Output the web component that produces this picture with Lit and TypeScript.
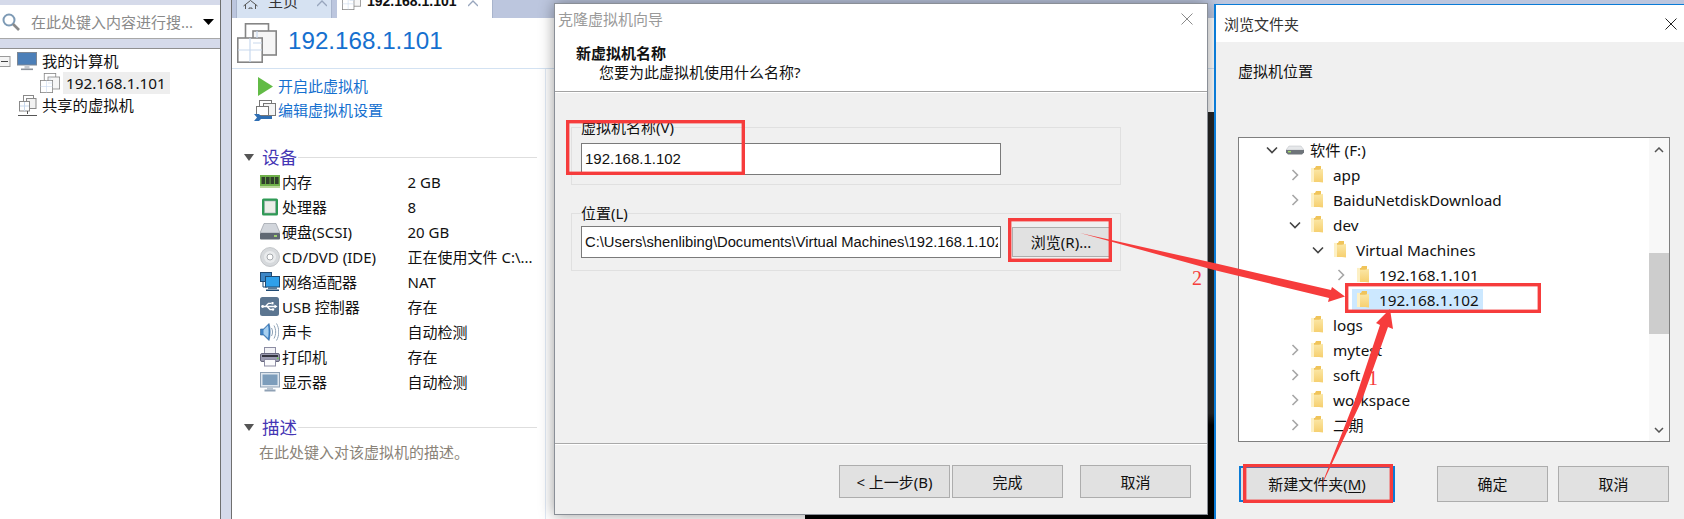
import { LitElement, html, css, svg } from "lit";
import { customElement } from "lit/decorators.js";

const vmIcon = (w: number, h: number) => html`<svg width=${w} height=${h} viewBox="0 0 40 40" fill="#fff" stroke="#858585" stroke-width="1.6">
  <rect x="8.5" y="0.8" width="23" height="22"/>
  <rect x="16" y="8" width="23.2" height="24" fill="#f6f6f6"/>
  <rect x="0.8" y="15" width="24.4" height="24.2"/>
  <path d="M13 15v24M1 27h24M20 8v7M16 20h9" stroke="#c9d9ee" fill="none" stroke-width="1.2"/>
</svg>`;

const monitor = html`<svg width="20" height="19" viewBox="0 0 20 19">
  <rect x="0.5" y="0.5" width="19" height="12.5" fill="#4c7fb8" stroke="#7d8794"/>
  <rect x="7.5" y="13" width="5" height="3.5" fill="#c4c8cf"/>
  <rect x="4" y="16.5" width="12" height="1.6" fill="#8c929b"/>
</svg>`;

const sharedVm = html`<svg width="19" height="21" viewBox="0 0 19 21" fill="#fff" stroke="#8a8a8a">
  <rect x="5.5" y="0.5" width="10" height="10"/>
  <rect x="8.5" y="3.5" width="9.5" height="10" fill="#f2f2f2"/>
  <rect x="1.5" y="6.5" width="10" height="9.5"/>
  <path d="M6.5 7v9M2 11h9" stroke="#c9d9ee"/>
  <path d="M9.5 16v3M0 20.5h19" stroke="#555"/>
</svg>`;

const minusBox = html`<svg width="11" height="11" viewBox="0 0 11 11">
  <rect x="-1" y="0.5" width="11" height="10" fill="#f4f4f4" stroke="#9a9a9a"/>
  <path d="M1 5.5h7" stroke="#444"/>
</svg>`;

const play = html`<svg width="15" height="19" viewBox="0 0 15 19"><path d="M0 0L15 9.5L0 19Z" fill="#62bb46"/></svg>`;

const editIcon = html`<svg width="22" height="21" viewBox="0 0 22 21" fill="#fff" stroke="#777">
  <rect x="5.5" y="0.5" width="12" height="12"/>
  <rect x="9.5" y="3.5" width="12" height="12" fill="#f4f4f4"/>
  <rect x="2.5" y="6.5" width="12" height="9"/>
  <path d="M0 14h5l2 2h11v3H7l-2 2H0l3-3.5z" fill="#2f6fb4" stroke="none"/>
</svg>`;

const ram = html`<svg width="20" height="15" viewBox="0 0 20 15">
  <rect x="0" y="1" width="20" height="11" fill="#6fb04a"/>
  <rect x="1.5" y="3" width="3.6" height="7" fill="#30402c"/>
  <rect x="6" y="3" width="3.6" height="7" fill="#30402c"/>
  <rect x="10.5" y="3" width="3.6" height="7" fill="#30402c"/>
  <rect x="15" y="3" width="3.6" height="7" fill="#30402c"/>
  <rect x="0" y="12" width="20" height="2" fill="#b9d79a"/>
</svg>`;

const cpu = html`<svg width="20" height="18" viewBox="0 0 20 18">
  <rect x="2" y="0.5" width="16" height="17" rx="1.5" fill="#2f9a55"/>
  <rect x="4.5" y="3" width="11" height="12" fill="#eceee8" stroke="#9aa" stroke-width=".6"/>
</svg>`;

const disk = html`<svg width="20" height="17" viewBox="0 0 20 17">
  <path d="M4 0.5h12L20 10H0z" fill="#d2d6dc" stroke="#8b929b" stroke-width=".6"/>
  <rect x="0" y="10" width="20" height="6.5" rx="1" fill="#5f6873"/>
  <rect x="14" y="12" width="3" height="2" fill="#9fd06f"/>
</svg>`;

const cd = html`<svg width="20" height="20" viewBox="0 0 20 20">
  <circle cx="10" cy="10" r="9.5" fill="#d6d9dc" stroke="#b4b8bc" stroke-width=".7"/>
  <circle cx="10" cy="10" r="6" fill="#e9ebed"/>
  <circle cx="10" cy="10" r="3" fill="#fff" stroke="#a6aaae"/>
</svg>`;

const net = html`<svg width="20" height="20" viewBox="0 0 20 20">
  <rect x="0.5" y="0.5" width="11" height="9" fill="#3c86c6" stroke="#1f4a73"/>
  <path d="M3 10v5h4" stroke="#1f4a73" fill="none"/>
  <rect x="5.5" y="4.5" width="14" height="10.5" fill="#2fa0ea" stroke="#1f4a73"/>
  <rect x="8" y="15" width="9" height="2" fill="#5a7c99"/>
  <rect x="6" y="17.5" width="13" height="1.5" fill="#1f4a73"/>
</svg>`;

const usb = html`<svg width="19" height="19" viewBox="0 0 19 19">
  <rect x="0" y="0" width="19" height="19" rx="2.5" fill="#5b7590"/>
  <path d="M2.5 9.5h13M5.5 9.5l3-3.2h3M7 9.5l3 3h2" stroke="#fff" stroke-width="1.3" fill="none"/>
  <path d="M14.5 7.5l3 2-3 2z" fill="#fff"/><rect x="11.5" y="5" width="2" height="2.4" fill="#fff"/>
  <circle cx="13" cy="12.5" r="1.2" fill="#fff"/><circle cx="2.6" cy="9.5" r="1.4" fill="#fff"/>
</svg>`;

const speaker = html`<svg width="19" height="20" viewBox="0 0 19 20">
  <path d="M0.5 7h3L9 1.5c1.5 4 1.5 13 0 17L3.5 13h-3z" fill="#3f83c6" stroke="#2a5e94" stroke-width=".6"/>
  <path d="M3.5 8L8 3.5c.8 3 .8 9 0 12.5L3.5 12z" fill="#a8d0f0"/>
  <path d="M11.5 6c1.4 2.5 1.4 5.5 0 8M14 3.5c2.2 4 2.2 9 0 13M16.5 1.5c3 5 3 12 0 17" stroke="#8ea2b6" fill="none"/>
</svg>`;

const printer = html`<svg width="20" height="20" viewBox="0 0 20 20">
  <rect x="4.5" y="0.5" width="11" height="7" fill="#f2f2f6" stroke="#8d8da3"/>
  <rect x="0.5" y="6.5" width="19" height="8" rx="1.5" fill="#9a9ab0" stroke="#66667c"/>
  <rect x="2" y="8" width="16" height="2" fill="#34343f"/>
  <rect x="17" y="10.5" width="1.6" height="1.6" fill="#6ccb4b"/>
  <rect x="4.5" y="12.5" width="11" height="6.5" fill="#fbfbfd" stroke="#8d8da3"/>
</svg>`;

const display = html`<svg width="20" height="20" viewBox="0 0 20 20">
  <rect x="0.5" y="0.5" width="19" height="14.5" fill="#dfe6ee" stroke="#8fa1b5"/>
  <rect x="2.5" y="2.5" width="15" height="10.5" fill="#7d9dbb"/>
  <rect x="7" y="15.5" width="6" height="2" fill="#b7c3d0"/>
  <rect x="4.5" y="17.5" width="11" height="2" fill="#8fa1b5"/>
</svg>`;

const folder = html`<svg class="folder" width="12" height="17" viewBox="0 0 12 18" preserveAspectRatio="none">
  <defs><linearGradient id="fg" x1="0" x2="0" y1="0" y2="1"><stop offset="0" stop-color="#fbe7a6"/><stop offset="1" stop-color="#f6cf6e"/></linearGradient></defs>
  <path d="M0 2h4l1-2h5v16H0z" fill="#f0c45a"/>
  <path d="M0 4h8l4-1v14.5L8 17H0z" fill="url(#fg)"/>
  <rect x="0" y="2" width="3" height="15" fill="#fdf0c4"/>
</svg>`;

const drive = html`<svg class="drive" width="18" height="10" viewBox="0 0 18 10">
  <path d="M3 1h12l3 4H0z" fill="#e6e8ea" stroke="#b8bcc0" stroke-width=".5"/>
  <path d="M0 5h18v2.5l-2 2H2l-2-2z" fill="#6e747a"/>
  <rect x="2" y="6" width="3" height="1.4" fill="#a3d86a"/>
</svg>`;

const chevRight = html`<svg width="10" height="12" viewBox="0 0 10 12"><path d="M2.5 1l5 5-5 5" fill="none" stroke="#a6a6a6" stroke-width="1.6"/></svg>`;
const chevDown = html`<svg width="12" height="10" viewBox="0 0 12 10"><path d="M1 2.5l5 5 5-5" fill="none" stroke="#444" stroke-width="1.6"/></svg>`;
const cross = (s: number, c: string) => html`<svg width=${s} height=${s} viewBox="0 0 12 12"><path d="M.5.5l11 11M11.5.5l-11 11" stroke=${c} fill="none" stroke-width="1"/></svg>`;

const devices = [
  [ram, "内存", "2 GB"],
  [cpu, "处理器", "8"],
  [disk, "硬盘(SCSI)", "20 GB"],
  [cd, "CD/DVD (IDE)", "正在使用文件 C:\\..."],
  [net, "网络适配器", "NAT"],
  [usb, "USB 控制器", "存在"],
  [speaker, "声卡", "自动检测"],
  [printer, "打印机", "存在"],
  [display, "显示器", "自动检测"],
] as const;

const folders: { level: number; name: string; state: "open" | "closed" | "none"; selected?: boolean }[] = [
  { level: 1, name: "app", state: "closed" },
  { level: 1, name: "BaiduNetdiskDownload", state: "closed" },
  { level: 1, name: "dev", state: "open" },
  { level: 2, name: "Virtual Machines", state: "open" },
  { level: 3, name: "192.168.1.101", state: "closed" },
  { level: 3, name: "192.168.1.102", state: "none", selected: true },
  { level: 1, name: "logs", state: "none" },
  { level: 1, name: "mytest", state: "closed" },
  { level: 1, name: "soft", state: "closed" },
  { level: 1, name: "workspace", state: "closed" },
  { level: 1, name: "二期", state: "closed" },
];

const RED = "#f63c3c";

@customElement("app-root")
export class AppRoot extends LitElement {
  static styles = css`
    :host {
      display: block; position: relative; width: 1684px; height: 519px; overflow: hidden;
      font: 15px/20px "Noto Sans", "Noto Sans CJK SC", sans-serif; color: #111; background: #d5daea;
    }
    * { box-sizing: border-box; }
    svg { display: block; flex: none; }
    .shell { display: flex; height: 519px; }

    .nav { width: 220px; flex: none; display: flex; flex-direction: column; background: #d5daea; }
    .search { margin-top: 5px; height: 34px; flex: none; background: #fff; border-bottom: 1px solid #a8a8a8;
      display: flex; align-items: center; padding-left: 2px; color: #8a8a8a; }
    .search span { margin-left: 11px; white-space: nowrap; flex: 1; }
    .search svg:last-child { margin-right: 6px; }
    .navtree { margin-top: 9px; flex: 1; background: #fff; border-top: 1px solid #8f8f8f; padding-top: 1px; font-size: 15.3px; }
    .nrow { height: 22px; display: flex; align-items: center; white-space: nowrap; }
    .nrow .lbl { margin-left: 5px; }
    .n0 { padding-left: 0; }
    .n0 svg:nth-child(2) { margin-left: 6px; }
    .n1 { padding-left: 40px; }
    .n1 .lbl { background: #eee; margin-left: 3px; padding: 1px 4px 1px 3px; }
    .n2 { padding-left: 18px; }
    .splitter { width: 12px; flex: none; background: #d5daea; border-left: 1px solid #6f6f6f; border-right: 1px solid #6f6f6f; }

    .main { flex: 1; display: flex; flex-direction: column; background: #fff; min-width: 0; }
    .tabs { height: 18px; flex: none; display: flex; gap: 5px; padding-left: 4px; background: #bcc6de; overflow: hidden; }
    .tab { height: 18px; display: flex; align-items: flex-start; white-space: nowrap; line-height: 20px; }
    .tab > * { margin-top: -9px; }
    .tab.home { width: 96px; background: #d6e2f2; border: 1px solid #a8b4cc; border-width: 0 1px; padding-left: 6px; color: #333; }
    .tab.vm { width: 156px; background: #fff; border-right: 1px solid #a8b4cc; padding-left: 5px; font-size: 14px; font-weight: 700; }
    .tab .t { margin-left: 10px; }
    .tab.vm .t { margin-left: 6px; font-family: "Liberation Sans", sans-serif; }
    .tab .x { margin-top: 0; margin-left: 0; }
    .home .x { margin-left: 19px; }
    .vm .x { margin-left: 11px; }

    .head { height: 51px; flex: none; display: flex; align-items: center; gap: 11px; padding-left: 5px;
      border-bottom: 1px solid #d3e2f2; }
    .head .title { font: 24.2px/30px "Liberation Sans", sans-serif; color: #1570cf; margin-bottom: 4px; }
    .content { width: 314px; flex: 1; border-right: 1px solid #e0e9f5; padding-top: 5px; }
    .action { height: 24px; display: flex; align-items: center; color: #1570cf; white-space: nowrap; }
    .action .slot { width: 46px; flex: none; display: flex; justify-content: flex-end; padding-right: 2px; }
    .action.start .slot { padding-right: 5px; }
    .section { display: flex; align-items: center; height: 24px; padding-left: 12px; }
    .section.dev { margin-top: 23px; }
    .section.desc { margin-top: 21px; }
    .tri { width: 0; height: 0; border: 5.5px solid transparent; border-top: 7px solid #555; border-bottom: 0; flex: none; }
    .section b { font-weight: 400; font-size: 17.5px; color: #4435b4; margin-left: 8px; white-space: nowrap; }
    .section i { flex: 1; height: 1px; background: #dedede; margin: 0 8px 0 1px; }
    .rows { padding-left: 28px; }
    .dr { height: 25px; display: grid; grid-template-columns: 22px 125.5px 1fr; align-items: center; white-space: nowrap; }
    .desc-text { margin: 3px 0 0 27px; color: #8a8378; white-space: nowrap; }

    .behind { position: absolute; left: 805px; top: 112px; width: 409px; bottom: 0;
      background: linear-gradient(#272727 0 74%, #000 77%); }

    .win { position: absolute; display: flex; flex-direction: column; background: #f0f0f0; }
    .wiz { left: 554px; top: 3px; width: 654px; height: 512px; border: 1px solid #8a8f97;
      box-shadow: 0 0 14px rgba(0, 0, 0, .4); }
    .wtitle { height: 30px; flex: none; background: #fff; display: flex; align-items: center; justify-content: space-between;
      padding: 0 14px 0 3px; color: #9a9a9a; }
    .whead { background: #fff; height: 58px; flex: none; padding: 9px 0 0 21px; border-bottom: 1px solid #a3a3a3; }
    .whead b { display: block; font-weight: 700; }
    .whead span { display: block; padding-left: 23px; white-space: nowrap; margin-top: -1px; }
    .wbody { flex: 1; border-top: 1px solid #fff; padding-left: 16px; }
    fieldset { margin: 0; width: 550px; border: 1px solid #e0e0e0; padding: 6px 9px 9px; min-width: 0; }
    fieldset.first { margin-top: 24px; }
    fieldset.second { margin-top: 18px; padding-top: 3px; padding-bottom: 12px; }
    legend { padding: 0; height: 20px; }
    .loc { display: flex; align-items: center; gap: 11px; }
    .input { width: 420px; height: 32px; flex: none; background: #fff; border: 1px solid #7a7a7a; padding-left: 3px;
      display: flex; align-items: center; overflow: hidden; white-space: nowrap; font-family: "Liberation Sans", sans-serif; }
    .input.path { font-size: 14.75px; padding-right: 2px; }
    .input.path span { display: block; width: 100%; overflow: hidden; }
    .btn { background: #e1e1e1; border: 1px solid #adadad; display: flex; align-items: center; justify-content: center; white-space: nowrap; flex: none; }
    .browse { width: 98px; height: 30px; }
    .wfoot { height: 71px; flex: none; border-top: 1px solid #a9a9a9; box-shadow: inset 0 1px 0 #fff; display: flex;
      justify-content: flex-end; padding: 21px 16px 0 0; }
    .wfoot .btn { width: 111px; height: 33px; }
    .wfoot .next { margin: 0 17px 0 2px; }

    .browser { left: 1214px; top: 4px; width: 470px; height: 515px; border-left: 2px solid #0a7bd6; border-top: 1px solid #0a7bd6; }
    .btitle { height: 37px; flex: none; background: #fff; display: flex; align-items: center; justify-content: space-between;
      padding: 0 7px 0 8px; color: #333; }
    .blabel { margin: 19px 0 0 22px; height: 20px; }
    .tree { margin: 56px 0 0 22px; width: 432px; height: 305px; flex: none; background: #fff; border: 1px solid #7f7f7f; display: flex; overflow: hidden; }
    .list { flex: 1; min-width: 0; margin-top: -1px; font-size: 15.3px; }
    .row { height: 25px; display: flex; align-items: center; white-space: nowrap; }
    .chev { width: 14px; flex: none; display: flex; justify-content: center; }
    .folder { margin-left: 9px; }
    .drive { margin-left: 7px; }
    .name { margin-left: 10px; }
    .drive + .name { margin-left: 6px; }
    .sel { display: flex; align-items: center; height: 22px; background: #cce8ff; margin-left: 4px; padding: 0 4px 0 5px; }
    .sel .folder { margin-left: 0; }
    .scroll { width: 20px; flex: none; display: flex; flex-direction: column; align-items: center; background: #f8f8f8; }
    .arrow { height: 23px; flex: none; display: flex; align-items: center; justify-content: center; }
    .gap { height: 92px; flex: none; }
    .thumb { width: 100%; height: 81px; flex: none; background: #cdcdcd; }
    .fill { flex: 1; }
    .bbar { display: flex; margin: 24px 0 0 23px; }
    .bbar .btn { height: 36px; width: 111px; }
    .bbar .new { width: 156px; margin-right: 42px; border: 2px solid #0a7bd6; }
    .bbar .ok { margin-right: 10px; }
    u { text-underline-offset: 2px; }

    .marks { position: absolute; inset: 0; pointer-events: none; }
  `;

  private folderRow(f: (typeof folders)[number]) {
    const pad = 26 + 23 * f.level;
    const chev = f.state === "open" ? chevDown : f.state === "closed" ? chevRight : "";
    return html`<div class="row" style="padding-left:${pad}px">
      <span class="chev">${chev}</span>
      ${f.selected
        ? html`<span class="sel">${folder}<span class="name">${f.name}</span></span>`
        : html`${folder}<span class="name">${f.name}</span>`}
    </div>`;
  }

  render() {
    return html`
      <div class="shell">
        <div class="nav">
          <div class="search">
            <svg width="18" height="18" viewBox="0 0 18 18"><circle cx="7" cy="7" r="5.5" fill="#fff" stroke="#7d9ab5" stroke-width="2"/><path d="M11 11l6 6" stroke="#8a8a8a" stroke-width="2.6"/></svg>
            <span>在此处键入内容进行搜...</span>
            <svg width="11" height="6" viewBox="0 0 11 6"><path d="M0 0h11L5.5 6z" fill="#000"/></svg>
          </div>
          <div class="navtree">
            <div class="nrow n0">${minusBox}${monitor}<span class="lbl">我的计算机</span></div>
            <div class="nrow n1">${vmIcon(20, 20)}<span class="lbl">192.168.1.101</span></div>
            <div class="nrow n2">${sharedVm}<span class="lbl">共享的虚拟机</span></div>
          </div>
        </div>
        <div class="splitter"></div>
        <div class="main">
          <div class="tabs">
            <div class="tab home">
              <svg width="15" height="18" viewBox="0 0 15 18"><path d="M7.5 9.5L0.5 15M2.5 13.5V26h10V13.5M14.5 15L7.5 9.5M6 26v-9h3v9" fill="none" stroke="#555"/></svg>
              <span class="t">主页</span>
              <svg class="x" width="10" height="7" viewBox="0 0 10 7"><path d="M0 1l5 5 5-5" transform="rotate(180 5 3.5)" fill="none" stroke="#98a6bd" stroke-width="1.4"/></svg>
            </div>
            <div class="tab vm">
              ${vmIcon(19, 19)}
              <span class="t">192.168.1.101</span>
              <svg class="x" width="10" height="7" viewBox="0 0 10 7"><path d="M0 1l5 5 5-5" transform="rotate(180 5 3.5)" fill="none" stroke="#98a6bd" stroke-width="1.4"/></svg>
            </div>
          </div>
          <div class="head">${vmIcon(40, 40)}<span class="title">192.168.1.101</span></div>
          <div class="content">
            <div class="action start"><span class="slot">${play}</span><span>开启此虚拟机</span></div>
            <div class="action"><span class="slot">${editIcon}</span><span>编辑虚拟机设置</span></div>
            <div class="section dev"><span class="tri"></span><b>设备</b><i></i></div>
            <div class="rows">
              ${devices.map((d) => html`<div class="dr">${d[0]}<span>${d[1]}</span><span>${d[2]}</span></div>`)}
            </div>
            <div class="section desc"><span class="tri"></span><b>描述</b><i></i></div>
            <div class="desc-text">在此处键入对该虚拟机的描述。</div>
          </div>
        </div>
      </div>

      <div class="behind"></div>

      <div class="win wiz">
        <div class="wtitle"><span>克隆虚拟机向导</span>${cross(12, "#8a8a8a")}</div>
        <div class="whead"><b>新虚拟机名称</b><span>您要为此虚拟机使用什么名称?</span></div>
        <div class="wbody">
          <fieldset class="first">
            <legend>虚拟机名称(V)</legend>
            <div class="input">192.168.1.102</div>
          </fieldset>
          <fieldset class="second">
            <legend>位置(L)</legend>
            <div class="loc">
              <div class="input path"><span>C:\\Users\\shenlibing\\Documents\\Virtual Machines\\192.168.1.102</span></div>
              <div class="btn browse">浏览(R)...</div>
            </div>
          </fieldset>
        </div>
        <div class="wfoot">
          <div class="btn">&lt; 上一步(B)</div>
          <div class="btn next">完成</div>
          <div class="btn">取消</div>
        </div>
      </div>

      <div class="win browser">
        <div class="btitle"><span>浏览文件夹</span>${cross(12, "#222")}</div>
        <div class="blabel">虚拟机位置</div>
        <div class="tree">
          <div class="list">
            <div class="row" style="padding-left:26px"><span class="chev">${chevDown}</span>${drive}<span class="name">软件 (F:)</span></div>
            ${folders.map((f) => this.folderRow(f))}
          </div>
          <div class="scroll">
            <div class="arrow"><svg width="10" height="6" viewBox="0 0 10 6"><path d="M1 5l4-4 4 4" fill="none" stroke="#555" stroke-width="1.5"/></svg></div>
            <div class="gap"></div>
            <div class="thumb"></div>
            <div class="fill"></div>
            <div class="arrow"><svg width="10" height="6" viewBox="0 0 10 6"><path d="M1 1l4 4 4-4" fill="none" stroke="#555" stroke-width="1.5"/></svg></div>
          </div>
        </div>
        <div class="bbar">
          <div class="btn new">新建文件夹(<u>M</u>)</div>
          <div class="btn ok">确定</div>
          <div class="btn">取消</div>
        </div>
      </div>

      <svg class="marks" width="1684" height="519" viewBox="0 0 1684 519">
        ${svg`
          <g fill="none" stroke=${RED} stroke-width="3.4">
            <rect x="567.7" y="121.7" width="175.6" height="51.6"/>
            <rect x="1009.7" y="219.7" width="100.6" height="40.6"/>
            <rect x="1346.7" y="284.7" width="192.6" height="26.6"/>
            <rect x="1244.7" y="465.7" width="146.6" height="35.6"/>
          </g>
          <path d="M1080 233L1214 263L1331 290L1332 287L1345 296.5L1328 302L1329 298L1214 270Z" fill=${RED}/>
          <path d="M1320 489L1355 400L1380 325L1376 323L1390 309L1393 329L1388 327L1362 400Z" fill=${RED}/>
          <text x="1192" y="285" font-family="Liberation Serif" font-size="20" fill=${RED}>2</text>
          <text x="1368" y="385" font-family="Liberation Serif" font-size="20" fill=${RED}>1</text>
        `}
      </svg>
    `;
  }
}
